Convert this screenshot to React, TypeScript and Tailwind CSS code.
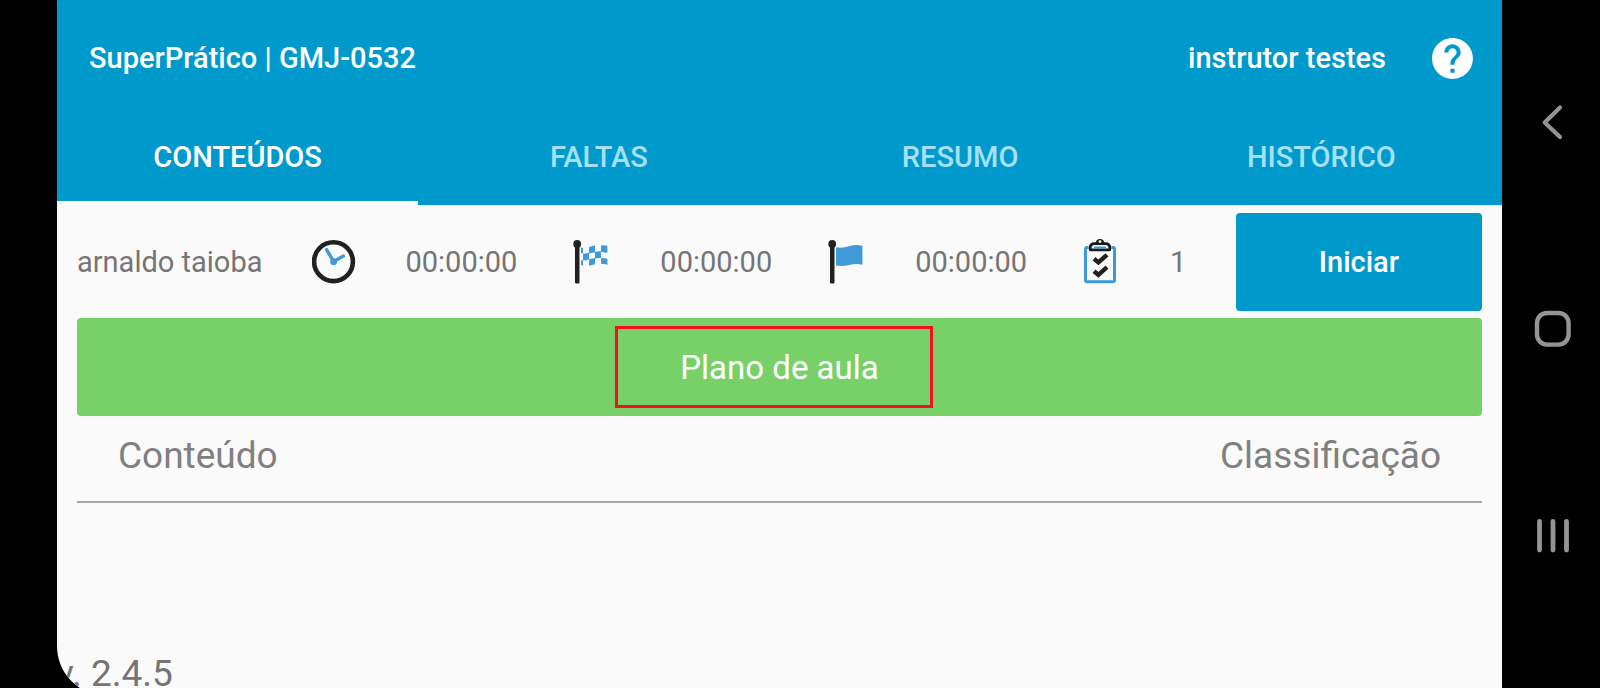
import { FC, useState } from "react"
import { MdHelp } from "react-icons/md"

const tabs = ["CONTEÚDOS", "FALTAS", "RESUMO", "HISTÓRICO"]

const ClockIcon: FC = () => (
    <svg viewBox="0 0 44 44" className="h-11 w-11 shrink-0" fill="none" aria-hidden="true">
        <circle cx="21.5" cy="21.7" r="19.4" stroke="#212121" strokeWidth="4.6" />
        <path d="M14.6 9.6 21.6 21.5 31.4 16" stroke="#3f9bd8" strokeWidth="3.4" strokeLinecap="round" />
        <circle cx="21.6" cy="21.7" r="3.4" fill="#3f9bd8" />
    </svg>
)

const FlagIcon: FC<{ checkered?: boolean }> = ({ checkered }) => (
    <svg viewBox="0 0 44 44" className="h-11 w-11 shrink-0" aria-hidden="true">
        <circle cx="10.2" cy="4" r="3.9" fill="#212121" />
        <path d="M8 4h4.5v38.6a.8.8 0 0 1-.8.8h-2.9a.8.8 0 0 1-.8-.8z" fill="#212121" />
        {checkered ? (
            <g fill="#3f9bd8">
                <path d="M14 7.3 16 8v5.6l-2-.6zM14 20.2l2 .2v5.2l-2-.5z" />
                <path d="M16 13.6q3 .2 6-1v6.6q-3 1.2-6 1.2z" />
                <path d="M22 7.200q3-1.200 6-1.600v7q-3 .1-6 1zM22 19.200q3-1 6-1.200v6.300q-3 1-6 1.400z" />
                <path d="M28 12q3-.9 6-.6v6.700q-3-.4-6 .3z" />
                <path d="M34 5.400q3.200-.3 6.400.3v7q-3.200-.2-6.400-1zM34 17.900q3.200 0 6.400.9v6q-3.200-.8-6.400-1z" />
            </g>
        ) : (
            <path d="M14 7.3q6.500 1 13-1t13.400-.6v19q-6.600-1.400-13.200.3t-13.200.6z" fill="#3f9bd8" />
        )}
    </svg>
)

const ClipboardIcon: FC = () => (
    <svg viewBox="0 0 44 44" className="h-11 w-11 shrink-0 overflow-visible" fill="none" aria-hidden="true">
        <path d="M11.500 7.500H10Q8.500 7.500 8.500 9v31.300q0 1.500 1.500 1.500h26q1.500 0 1.500-1.500V9q0-1.500-1.500-1.500h-1.500" stroke="#3f9bd8" strokeWidth="3" />
        <path d="M18.500 4Q18.800-1 23-1t4.500 5z" fill="#1a1a1a" />
        <path d="M13.200 9.400V7.800Q13.200 3.700 17.500 3.700h11q4.300 0 4.300 4.100v1.600q0 .5-.5.5H13.700q-.5 0-.5-.5z" fill="#fafafa" stroke="#1a1a1a" strokeWidth="2.800" />
        <circle cx="23" cy="1.600" r="1.400" fill="#fafafa" />
        <path d="M17 7.500h12" stroke="#3f9bd8" strokeWidth="2" />
        <path d="M17 18.800 21.400 22.400 30 14.800M17 31.200 21.400 34.800 30 27.200" stroke="#212121" strokeWidth="4.400" />
    </svg>
)

const SystemNav: FC = () => (
    <nav aria-label="Sistema" className="flex w-[98px] shrink-0 flex-col items-center justify-between pt-[98px] pb-32 pl-1">
        <button aria-label="Voltar" className="h-12 w-12">
            <svg viewBox="0 0 48 48" fill="none" stroke="#949494" strokeWidth="4.2" strokeLinecap="round" strokeLinejoin="round">
                <path d="M31 9.5 15.7 24.5 31 39" />
            </svg>
        </button>
        <button aria-label="Início" className="h-12 w-12">
            <svg viewBox="0 0 48 48" fill="none" stroke="#949494" strokeWidth="4.4">
                <rect x="8" y="8" width="31.6" height="31.6" rx="10" />
            </svg>
        </button>
        <button aria-label="Recentes" className="h-12 w-12">
            <svg viewBox="0 0 48 48" fill="none" stroke="#949494" strokeWidth="4.8" strokeLinecap="round">
                <path d="M10.5 9.5v28.6M24 9.5v28.6M37.5 9.5v28.6" />
            </svg>
        </button>
    </nav>
)

const App: FC = () => {
    const [active, setActive] = useState(0)

    return (
        <div className="flex h-screen overflow-hidden bg-black pl-[57px] font-['Roboto',sans-serif] text-[29px] leading-9">
            <div className="-mt-[42px] -mb-2 flex min-w-0 flex-1 flex-col overflow-hidden rounded-l-[50px] bg-[#fafafa] text-[#757575]">
                <header className="bg-[#0099cc] pt-11 font-medium text-white">
                    <div className="flex h-28 items-center justify-between pr-[25px] pl-8">
                        <h1>SuperPrático | GMJ-0532</h1>
                        <div className="flex items-center gap-[42px]">
                            <span>instrutor testes</span>
                            <button aria-label="Ajuda">
                                <MdHelp className="h-[49px] w-[49px]" />
                            </button>
                        </div>
                    </div>
                    <div role="tablist" className="grid h-[91px] grid-cols-4">
                        {tabs.map((tab, i) => (
                            <button
                                key={tab}
                                role="tab"
                                aria-selected={active === i}
                                onClick={() => setActive(i)}
                                className={`border-b-4 pb-0.5 ${active === i ? "border-white" : "border-transparent text-[#a6e0f4]"}`}
                            >
                                {tab}
                            </button>
                        ))}
                    </div>
                </header>
                <main className="flex flex-col px-5 pt-2">
                    <div className="flex items-center justify-between">
                        <span>arnaldo taioba</span>
                        <ClockIcon />
                        <span>00:00:00</span>
                        <FlagIcon checkered />
                        <span>00:00:00</span>
                        <FlagIcon />
                        <span>00:00:00</span>
                        <ClipboardIcon />
                        <span>1</span>
                        <button className="h-[98px] w-[246px] rounded bg-[#0099cc] font-medium text-white">Iniciar</button>
                    </div>
                    <div className="relative mt-[7px]">
                        <button className="h-[98px] w-full rounded bg-[#78d168] pt-0.5 text-[33px] text-white">Plano de aula</button>
                        <div className="pointer-events-none absolute inset-y-2 left-[calc(50%-165px)] w-[318px] border-3 border-[#f50f20]" />
                    </div>
                    <table className="w-full text-[37px] leading-11 text-[#808080]">
                        <thead>
                            <tr className="border-b-2 border-[#a6a6a6]">
                                <th className="px-[41px] pt-[18px] pb-[23px] text-left font-normal">Conteúdo</th>
                                <th className="px-[41px] pt-[18px] pb-[23px] text-right font-normal">Classificação</th>
                            </tr>
                        </thead>
                    </table>
                </main>
                <footer className="mt-auto -ml-px text-[37px] leading-11">v. 2.4.5</footer>
            </div>
            <SystemNav />
        </div>
    )
}

export default App
